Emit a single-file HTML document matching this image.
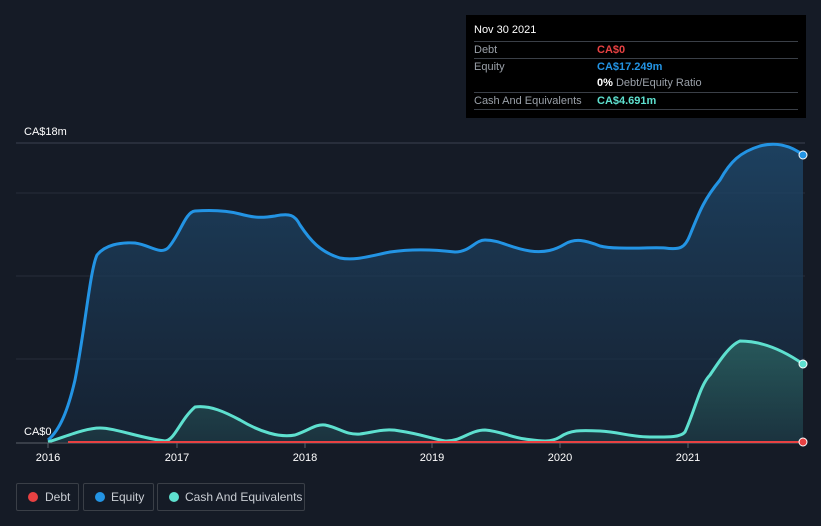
<!DOCTYPE html>
<html><head><style>
body{margin:0;width:821px;height:526px;background:#151b26;font-family:"Liberation Sans",sans-serif;overflow:hidden;position:relative}
.tt{position:absolute;left:466px;top:15px;width:340px;height:103px;background:#000;color:#fff;font-size:11px}
.tt .r{position:absolute;left:8px;width:324px;border-top:1px solid #3a3f47;height:16px;line-height:16px}
.tt .l{color:#9aa0a8;position:absolute;left:0}
.tt .v{position:absolute;left:123px;font-weight:bold}
.lg{position:absolute;top:483px;height:26px;border:1px solid #3a3f47;border-radius:2px;color:#c9cdd3;font-size:12px;line-height:26px}
.lg i{position:absolute;left:11px;top:8px;width:10px;height:10px;border-radius:50%}
</style></head><body>
<svg width="821" height="526" style="position:absolute;left:0;top:0">
<defs><linearGradient id="g" x1="0" y1="0" x2="0" y2="1"><stop offset="0" stop-color="#1f4a6e" stop-opacity=".8"/><stop offset="1" stop-color="#16263a" stop-opacity=".6"/></linearGradient>
<linearGradient id="c" x1="0" y1="0" x2="0" y2="1"><stop offset="0" stop-color="#2d6b66"/><stop offset="1" stop-color="#1d3a44"/></linearGradient></defs>
<line x1="16" y1="143" x2="805" y2="143" stroke="#3a4150"/>
<line x1="16" y1="193" x2="805" y2="193" stroke="#262d3a"/>
<line x1="16" y1="276" x2="805" y2="276" stroke="#262d3a"/>
<line x1="16" y1="359" x2="805" y2="359" stroke="#262d3a"/>
<path d="M48,440 C60,430 68,410 75,380 C85,330 90,270 97,255 C105,245 120,242 135,243 C150,245 160,255 168,248 C180,235 185,212 195,211 C210,210 225,210 240,214 C255,218 262,218 275,216 C290,213 295,215 300,225 C310,240 320,252 340,258 C355,261 370,256 390,252 C410,249 430,249 455,252 C470,252 475,240 485,240 C500,240 510,248 530,251 C545,253 555,250 565,244 C575,238 585,240 600,246 C615,250 650,247 665,248 C680,250 685,248 690,235 C700,210 705,198 720,180 C730,162 740,152 760,146 C775,142 790,145 803,155 L803,442 L48,442Z" fill="url(#g)"/>
<path d="M48,440 C60,430 68,410 75,380 C85,330 90,270 97,255 C105,245 120,242 135,243 C150,245 160,255 168,248 C180,235 185,212 195,211 C210,210 225,210 240,214 C255,218 262,218 275,216 C290,213 295,215 300,225 C310,240 320,252 340,258 C355,261 370,256 390,252 C410,249 430,249 455,252 C470,252 475,240 485,240 C500,240 510,248 530,251 C545,253 555,250 565,244 C575,238 585,240 600,246 C615,250 650,247 665,248 C680,250 685,248 690,235 C700,210 705,198 720,180 C730,162 740,152 760,146 C775,142 790,145 803,155" fill="none" stroke="#2394e4" stroke-width="3"/>
<path d="M48,442 C65,437 85,428 100,428 C115,428 140,438 165,441 C175,440 180,420 195,407 C210,405 225,412 240,420 C260,432 280,438 295,435 C310,430 315,424 325,425 C340,428 345,435 360,434 C375,432 385,428 400,431 C420,434 430,438 445,441 C460,442 470,430 485,430 C500,431 510,437 525,439 C540,441 550,443 560,437 C570,430 580,430 600,431 C620,432 630,437 650,437 C665,437 680,438 685,432 C695,410 700,385 710,375 C720,360 730,345 740,341 C760,341 780,348 803,364 L803,442 L48,442Z" fill="url(#c)" opacity=".7"/>
<path d="M48,442 C65,437 85,428 100,428 C115,428 140,438 165,441 C175,440 180,420 195,407 C210,405 225,412 240,420 C260,432 280,438 295,435 C310,430 315,424 325,425 C340,428 345,435 360,434 C375,432 385,428 400,431 C420,434 430,438 445,441 C460,442 470,430 485,430 C500,431 510,437 525,439 C540,441 550,443 560,437 C570,430 580,430 600,431 C620,432 630,437 650,437 C665,437 680,438 685,432 C695,410 700,385 710,375 C720,360 730,345 740,341 C760,341 780,348 803,364" fill="none" stroke="#5ee0cf" stroke-width="3"/>
<line x1="16" y1="443" x2="805" y2="443" stroke="#5a606b"/>
<line x1="68" y1="442" x2="803" y2="442" stroke="#e84142" stroke-width="2"/>
<circle cx="803" cy="155" r="4" fill="#2394e4" stroke="#fff" stroke-width="1"/>
<circle cx="803" cy="364" r="4" fill="#5ee0cf" stroke="#fff" stroke-width="1"/>
<circle cx="803" cy="442" r="4" fill="#e84142" stroke="#fff" stroke-width="1"/>
<g stroke="#5a606b"><line x1="48" y1="443" x2="48" y2="448"/><line x1="177" y1="443" x2="177" y2="448"/><line x1="305" y1="443" x2="305" y2="448"/><line x1="432" y1="443" x2="432" y2="448"/><line x1="560" y1="443" x2="560" y2="448"/><line x1="688" y1="443" x2="688" y2="448"/></g>
<g fill="#fff" font-size="11" font-family="Liberation Sans" text-anchor="middle"><text x="48" y="461">2016</text><text x="177" y="461">2017</text><text x="305" y="461">2018</text><text x="432" y="461">2019</text><text x="560" y="461">2020</text><text x="688" y="461">2021</text></g>
<text x="24" y="135" fill="#fff" font-size="11" font-family="Liberation Sans">CA$18m</text>
<text x="24" y="435" fill="#fff" font-size="11" font-family="Liberation Sans">CA$0</text>
</svg>
<div class="tt">
<div style="position:absolute;left:8px;top:9px">Nov 30 2021</div>
<div class="r" style="top:26px"><span class="l">Debt</span><span class="v" style="color:#e84142">CA$0</span></div>
<div class="r" style="top:43px"><span class="l">Equity</span><span class="v" style="color:#2394e4">CA$17.249m</span></div>
<div class="r" style="top:60px;border:0"><span class="v" style="color:#fff">0% <span style="color:#9aa0a8;font-weight:normal">Debt/Equity Ratio</span></span></div>
<div class="r" style="top:77px;border-bottom:1px solid #3a3f47"><span class="l">Cash And Equivalents</span><span class="v" style="color:#5ee0cf">CA$4.691m</span></div>
</div>
<div class="lg" style="left:16px;width:61px"><i style="background:#e84142"></i><span style="position:absolute;left:28px">Debt</span></div>
<div class="lg" style="left:83px;width:69px"><i style="background:#2394e4"></i><span style="position:absolute;left:27px">Equity</span></div>
<div class="lg" style="left:157px;width:146px"><i style="background:#5ee0cf"></i><span style="position:absolute;left:27px">Cash And Equivalents</span></div>
</body></html>
